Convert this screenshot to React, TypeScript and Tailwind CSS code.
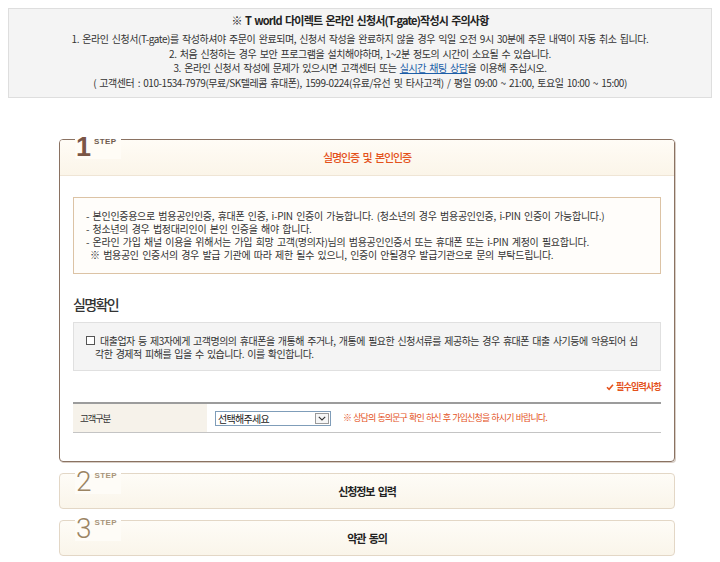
import React from "react";

function StepLabel({ n, strong }: { n: string; strong?: boolean }) {
  return (
    <div
      className={
        "absolute left-[15px] top-[-5px] flex items-start pl-[1px] pr-[4px] " +
        (strong
          ? "bg-[linear-gradient(#ffffff_0_5px,#fffcf6_5px)]"
          : "bg-[linear-gradient(#ffffff_0_5px,#fefcf7_5px)]")
      }
    >
      {strong ? (
        <span className="font-['Liberation_Sans',Arial,sans-serif] font-bold text-[27px] leading-[24px] text-[#7a5646]">
          {n}
        </span>
      ) : (
        <span className="font-['Roboto',sans-serif] font-light text-[28px] leading-[24px] text-[#9b8462] mt-[1px]">
          {n}
        </span>
      )}
      <span
        className={
          "ml-[3px] mt-[3px] font-['Liberation_Sans',Arial,sans-serif] font-bold text-[8px] leading-[8px] tracking-[0.4px] " +
          (strong ? "text-[#6f5a4e]" : "text-[#a8957a]")
        }
      >
        STEP
      </span>
    </div>
  );
}

function CollapsedStep({ n, title }: { n: string; title: string }) {
  return (
    <div className="relative mt-[11px] h-[36px] w-[616px] rounded-[4px] border border-[#e3d7c6] bg-[linear-gradient(#fefcf7,#faf5ea)]">
      <StepLabel n={n} />
      <div className="flex h-full items-center justify-center text-[11px] font-bold tracking-[-1.1px] text-[#222] [word-spacing:2px]">
        {title}
      </div>
    </div>
  );
}

export default function App() {
  return (
    <div className="h-[562px] w-[720px] overflow-hidden bg-white font-['Noto_Sans_CJK_KR','Noto_Sans',sans-serif] text-[#333]">
      {/* top notice */}
      <div className="mx-[8px] mt-[8px] h-[90px] border border-[#dedede] bg-[#f4f4f4] pt-[3px] text-center">
        <div className="text-[11px] font-bold leading-[16px] tracking-[-0.8px] text-[#222] [word-spacing:1.5px]">
          ※ T world 다이렉트 온라인 신청서(T-gate)작성시 주의사항
        </div>
        <div className="mt-[4px] text-[10px] leading-[14.5px] tracking-[-0.45px] [word-spacing:1.5px]">
          <div>1. 온라인 신청서(T-gate)를 작성하셔야 주문이 완료되며, 신청서 작성을 완료하지 않을 경우 익일 오전 9시 30분에 주문 내역이 자동 취소 됩니다.</div>
          <div>2. 처음 신청하는 경우 보안 프로그램을 설치해야하며, 1~2분 정도의 시간이 소요될 수 있습니다.</div>
          <div>
            3. 온라인 신청서 작성에 문제가 있으시면 고객센터 또는{" "}
            <span className="text-[#1d5ea8] underline">실시간 채팅 상담</span>을 이용해 주십시오.
          </div>
          <div>( 고객센터 : 010-1534-7979(무료/SK텔레콤 휴대폰), 1599-0224(유료/유선 및 타사고객) / 평일 09:00 ~ 21:00, 토요일 10:00 ~ 15:00)</div>
        </div>
      </div>

      <div className="ml-[59px] w-[616px]">
        {/* step 1 */}
        <div className="relative mt-[41px] rounded-[4px] border border-[#8a7262] shadow-[1px_1px_0_#d8cec6]">
          <StepLabel n="1" strong />
          <div className="flex h-[36px] items-center justify-center rounded-t-[3px] border-b border-[#efe5d5] bg-[linear-gradient(#fffcf6,#fbf5e9)] text-[11px] font-medium tracking-[-1.1px] text-[#e4521c] [word-spacing:2px]">
            실명인증 및 본인인증
          </div>
          <div className="px-[13px] pb-[28px] pt-[21px]">
            <div className="border border-[#dcc3a5] bg-[#fffdfa] pb-[12px] pl-[12px] pt-[11px] text-[10px] leading-[13px] tracking-[-0.3px] [word-spacing:1.5px]">
              <div>- 본인인증용으로 범용공인인증, 휴대폰 인증, i-PIN 인증이 가능합니다. (청소년의 경우 범용공인인증, i-PIN 인증이 가능합니다.)</div>
              <div>- 청소년의 경우 법정대리인이 본인 인증을 해야 합니다.</div>
              <div>- 온라인 가입 채널 이용을 위해서는 가입 희망 고객(명의자)님의 범용공인인증서 또는 휴대폰 또는 i-PIN 계정이 필요합니다.</div>
              <div className="pl-[4px]">※ 범용공인 인증서의 경우 발급 기관에 따라 제한 될수 있으니, 인증이 안될경우 발급기관으로 문의 부탁드립니다.</div>
            </div>

            <div className="mt-[22px] text-[14px] font-medium leading-[16px] tracking-[-1.6px] text-[#333]">실명확인</div>

            <div className="mt-[10px] border border-[#e0e0e0] bg-[#f4f4f4] pb-[10px] pl-[21px] pt-[11px] text-[10px] leading-[13px] tracking-[-0.5px] [word-spacing:1.5px]">
              <div className="relative whitespace-nowrap">
                <span className="absolute left-[-9px] top-[2px] h-[9px] w-[9px] border border-[#555] bg-white" />
                <span className="pl-[5px]">대출업자 등 제3자에게 고객명의의 휴대폰을 개통해 주거나, 개통에 필요한 신청서류를 제공하는 경우 휴대폰 대출 사기등에 악용되어 심</span>
              </div>
              <div className="whitespace-nowrap">각한 경제적 피해를 입을 수 있습니다. 이를 확인합니다.</div>
            </div>

            <div className="mt-[9px] flex h-[14px] items-center justify-end gap-[2px] text-[9px] font-bold tracking-[-0.8px] text-[#e4521c]">
              <svg width="8" height="8" viewBox="0 0 8 8">
                <path d="M1 4.2 L3.1 6.3 L7 1.8" fill="none" stroke="#e4521c" strokeWidth="1.6" />
              </svg>
              <span>필수입력사항</span>
            </div>

            <div className="mt-[8px] flex h-[31px] border-b border-[#c4c4c4] border-t-2 border-t-[#9c9c9c]">
              <div className="flex w-[134px] items-center bg-[#f6f2ea] pl-[7px] text-[9.5px] tracking-[-1.2px] text-[#333]">고객구분</div>
              <div className="flex items-center pl-[8px]">
                <div className="flex h-[15px] w-[116px] items-center justify-between border border-[#7f9db9] bg-white">
                  <span className="pl-[2px] text-[10px] leading-[13px] tracking-[-0.7px] text-[#222]">선택해주세요</span>
                  <span className="mr-[1px] flex h-[11px] w-[14px] items-center justify-center border border-[#9a9a9a] bg-[#f6f6f6]">
                    <svg width="8" height="5" viewBox="0 0 8 5">
                      <path d="M0.8 0.8 L4 4 L7.2 0.8" fill="none" stroke="#333" strokeWidth="1.1" />
                    </svg>
                  </span>
                </div>
                <span className="ml-[12px] text-[9px] tracking-[-0.9px] text-[#e4521c] [word-spacing:1px]">
                  ※ 상담의 동의문구 확인 하신 후 가입신청을 하시기 바랍니다.
                </span>
              </div>
            </div>
          </div>
        </div>

        <CollapsedStep n="2" title="신청정보 입력" />
        <CollapsedStep n="3" title="약관 동의" />
      </div>
    </div>
  );
}
